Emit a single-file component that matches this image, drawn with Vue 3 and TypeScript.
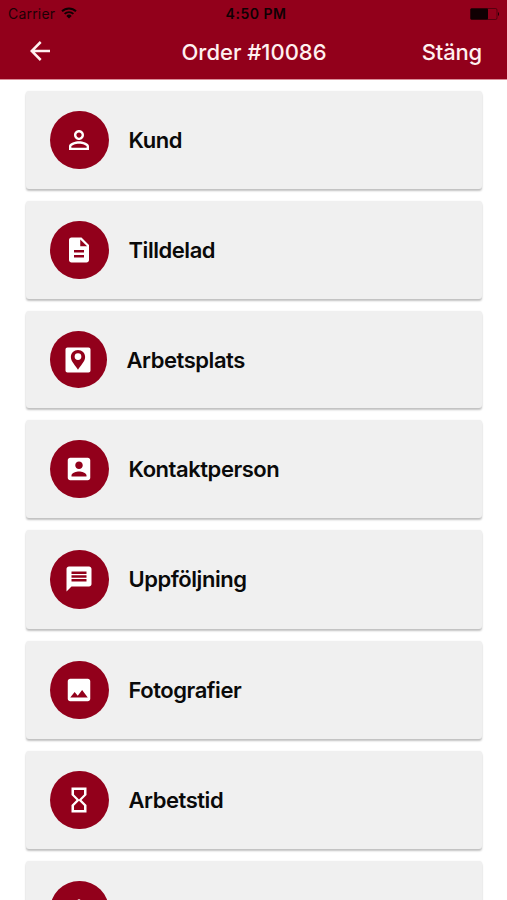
<script setup lang="ts">
interface MenuItem {
  id: string
  label?: string
  icon: string
  compact?: boolean
}

const items: MenuItem[] = [
  {
    id: 'customer',
    label: 'Kund',
    icon: 'M12 5.9c1.16 0 2.1.94 2.1 2.1s-.94 2.1-2.1 2.1S9.9 9.16 9.9 8s.94-2.1 2.1-2.1m0 9c2.97 0 6.1 1.46 6.1 2.1v1.1H5.9V17c0-.64 3.13-2.1 6.1-2.1M12 4C9.79 4 8 5.79 8 8s1.79 4 4 4 4-1.79 4-4-1.79-4-4-4zm0 9c-2.67 0-8 1.34-8 4v3h16v-3c0-2.66-5.33-4-8-4z',
  },
  {
    id: 'assigned',
    label: 'Tilldelad',
    icon: 'M14 2H6c-1.1 0-2 .9-2 2v16c0 1.1.89 2 1.99 2H18c1.1 0 2-.9 2-2V8l-6-6zm2 16H8v-2h8v2zm0-4H8v-2h8v2zm-3-5V3.5L18.5 9H13z',
  },
  {
    id: 'site',
    label: 'Arbetsplats',
    compact: true,
    icon: 'M3.6 2h16.8c.9 0 1.6.7 1.6 1.6v16.8c0 .9-.7 1.6-1.6 1.6H3.6c-.9 0-1.6-.7-1.6-1.6V3.6C2 2.7 2.7 2 3.6 2zM12 3.9c-3.2 0-5.7 2.5-5.7 5.7 0 3.9 3.9 6.8 5.7 10.200 1.800-3.400 5.700-6.300 5.700-10.200 0-3.200-2.500-5.700-5.700-5.700zM12 6.500a2.700 2.700 0 1 1 0 5.400 2.700 2.700 0 0 1 0-5.400z',
  },
  {
    id: 'contact',
    label: 'Kontaktperson',
    icon: 'M3 5v14c0 1.1.89 2 2 2h14c1.1 0 2-.9 2-2V5c0-1.1-.9-2-2-2H5c-1.11 0-2 .9-2 2zm12 4c0 1.66-1.34 3-3 3s-3-1.34-3-3 1.34-3 3-3 3 1.34 3 3zm-9 8c0-2 4-3.1 6-3.1s6 1.1 6 3.1v1H6v-1z',
  },
  {
    id: 'follow-up',
    label: 'Uppföljning',
    icon: 'M20 2H4c-1.1 0-1.99.9-1.99 2L2 22l4-4h14c1.1 0 2-.9 2-2V4c0-1.1-.9-2-2-2zM6 6h12v2H6zM6 9h12v2H6zM6 12h12v2H6z',
  },
  {
    id: 'photos',
    label: 'Fotografier',
    icon: 'M21 19V5c0-1.1-.9-2-2-2H5c-1.1 0-2 .9-2 2v14c0 1.1.9 2 2 2h14c1.1 0 2-.9 2-2zM8.5 13.5l2.5 3.01L14.5 12l4.5 6H5l3.5-4.5z',
  },
  {
    id: 'hours',
    label: 'Arbetstid',
    icon: 'M6 2v6h.01L6 8.01 10 12l-4 4 .01.01H6V22h12v-5.99h-.01L18 16l-4-4 4-3.99-.01-.01H18V2H6zm10 14.5V20H8v-3.5l4-4 4 4zm-4-5l-4-4V4h8v3.5l-4 4z',
  },
  {
    id: 'alerts',
    icon: 'M12 22c1.1 0 2-.9 2-2h-4c0 1.1.89 2 2 2zm6-6v-5c0-3.07-1.64-5.64-4.5-6.32V4c0-.83-.67-1.5-1.5-1.5s-1.5.67-1.5 1.5v.68C7.63 5.36 6 7.92 6 11v5l-2 2v1h16v-1l-2-2z',
  },
]
</script>

<template>
  <main class="screen">
    <header class="header">
      <div class="status">
        <div class="carrier">
          <span>Carrier</span>
          <svg class="wifi" viewBox="0 0 16 12" aria-hidden="true">
            <path d="M1 4.3a10 10 0 0 1 14 0M3.6 6.9a6.3 6.3 0 0 1 8.8 0" fill="none" stroke="currentColor" stroke-width="1.9" />
            <path d="M8 11.6L5.3 8.9a3.9 3.9 0 0 1 5.4 0z" fill="currentColor" />
          </svg>
        </div>
        <span class="clock">4:50 PM</span>
        <svg class="battery" viewBox="0 0 30 12" aria-hidden="true">
          <rect x="0.5" y="0.5" width="26.5" height="11" rx="1.5" fill="none" stroke="currentColor" stroke-opacity="0.45" />
          <rect x="0.5" y="0.5" width="17.5" height="11" rx="1" fill="currentColor" />
          <path d="M28 4c1.3.6 1.3 3.4 0 4z" fill="currentColor" />
        </svg>
      </div>
      <nav class="nav">
        <svg class="back" viewBox="0 0 20 20" aria-hidden="true">
          <path d="M20 10H2M10.7 1L1.700 10l9 9" fill="none" stroke="currentColor" stroke-width="2.5" />
        </svg>
        <h1 class="title">Order #10086</h1>
        <span class="close">Stäng</span>
      </nav>
    </header>
    <ul class="list">
      <li v-for="item in items" :key="item.id" class="card" :class="{ compact: item.compact }">
        <span class="badge">
          <svg class="icon" viewBox="0 0 24 24" aria-hidden="true">
            <path :d="item.icon" fill="currentColor" fill-rule="evenodd" />
          </svg>
        </span>
        <span v-if="item.label" class="label">{{ item.label }}</span>
      </li>
    </ul>
  </main>
</template>

<style>
body {
  background: #fff;
  overflow: hidden;
}
</style>

<style scoped>
.screen {
  height: 900px;
  overflow: hidden;
  font-family: Inter, 'Liberation Sans', sans-serif;
  color: #0a0a0a;
}
.header {
  box-sizing: border-box;
  height: 79px;
  background: #92001b;
  box-shadow: 0 1px 0 #d98e99;
}
.status {
  display: grid;
  grid-template-columns: 1fr auto 1fr;
  align-items: center;
  height: 27px;
  padding: 0 7px 0 8px;
  color: #100003;
  font-size: 14px;
  line-height: 27px;
}
.carrier {
  display: flex;
  align-items: center;
  gap: 6px;
  color: #1c0005;
  letter-spacing: 0.2px;
}
.wifi {
  width: 16px;
  height: 12px;
  margin-bottom: 1px;
  color: #100003;
}
.clock {
  padding-left: 4px;
  font-weight: 600;
  letter-spacing: 0.5px;
}
.battery {
  justify-self: end;
  width: 30px;
  height: 12px;
}
.nav {
  display: grid;
  grid-template-columns: 1fr auto 1fr;
  align-items: center;
  height: 50px;
  padding: 0 25px 0 30px;
  color: #fff0f0;
  font-size: 22px;
  font-weight: 500;
}
.back {
  width: 20px;
  height: 20px;
  margin-bottom: 2px;
}
.title {
  margin: 0 4px 0 0;
  font-size: inherit;
  font-weight: 500;
}
.close {
  justify-self: end;
  letter-spacing: -0.2px;
}
.list {
  display: flex;
  flex-direction: column;
  gap: 11.9px;
  margin: 0;
  padding: 11.6px 25px 0 26px;
  list-style: none;
}
.card {
  box-sizing: border-box;
  flex: none;
  display: flex;
  align-items: center;
  gap: 20px;
  height: 98.5px;
  padding-left: 24px;
  border-radius: 3px;
  background: #f0f0f0;
  box-shadow: 0 2px 2px rgba(0, 0, 0, 0.24), 0 0 2px rgba(0, 0, 0, 0.06);
}
.card.compact {
  height: 96.5px;
}
.badge {
  box-sizing: border-box;
  display: grid;
  place-items: center;
  width: 58.5px;
  height: 58.5px;
  padding-right: 1px;
  border-radius: 50%;
  background: #92001b;
  color: #fff;
}
.compact .badge {
  width: 56.5px;
  height: 56.5px;
}
.icon {
  width: 30px;
  height: 30px;
}
.label {
  font-size: 22px;
  font-weight: 600;
  line-height: 28px;
  letter-spacing: -0.45px;
}
</style>
